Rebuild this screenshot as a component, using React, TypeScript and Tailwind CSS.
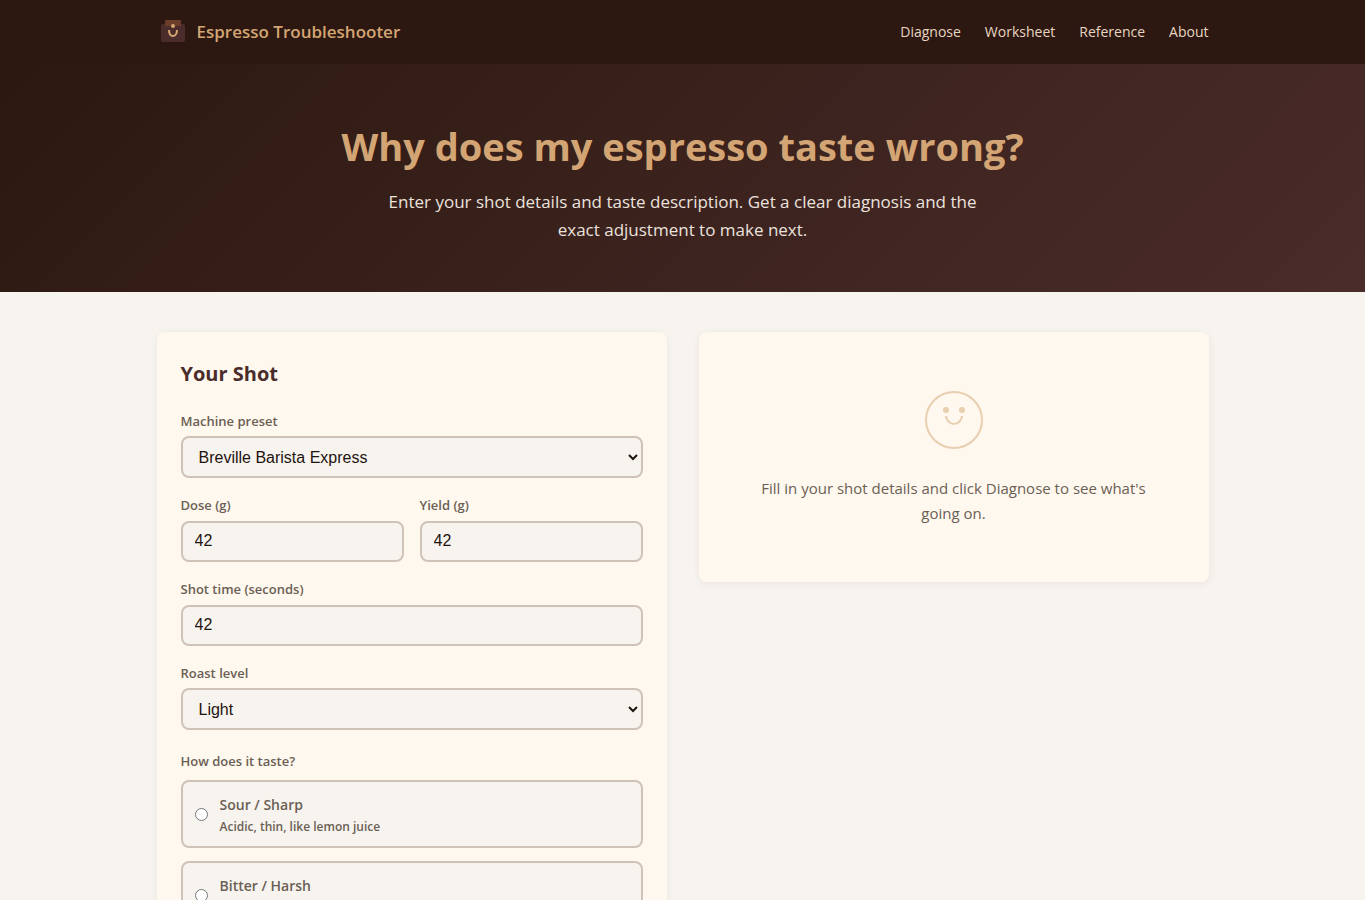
import { useState } from "react";
import type { ReactNode } from "react";

interface FieldProps {
    id: string;
    label: string;
    children: ReactNode;
}

interface NumberFieldProps {
    id: string;
    label: string;
    defaultValue: number;
}

interface SelectFieldProps {
    id: string;
    label: string;
    options: string[];
}

interface Taste {
    value: string;
    name: string;
    hint?: string;
}

const links = ["Diagnose", "Worksheet", "Reference", "About"];

const tastes: Taste[] = [
    { value: "sour", name: "Sour / Sharp", hint: "Acidic, thin, like lemon juice" },
    { value: "bitter", name: "Bitter / Harsh" },
];

const Logo = () => (
    <svg width="32" height="32" viewBox="0 0 32 32" fill="none" aria-hidden="true">
        <rect x="4" y="8" width="24" height="18" rx="2" fill="#4a2c2a" />
        <rect x="8" y="4" width="16" height="6" rx="1" fill="#6b3e2a" />
        <circle cx="16" cy="10" r="2" fill="#d4a574" />
        <path d="M12 14c0 4 2 6 4 6s4-2 4-6" stroke="#d4a574" strokeWidth="2" />
    </svg>
);

const Field = ({ id, label, children }: FieldProps) => (
    <div className="flex flex-col">
        <label htmlFor={id} className="text-[13px] leading-[22px] font-semibold text-[#6b5f55]">
            {label}
        </label>
        {children}
    </div>
);

const NumberField = ({ id, label, defaultValue }: NumberFieldProps) => (
    <Field id={id} label={label}>
        <input
            id={id}
            type="number"
            defaultValue={defaultValue}
            className="mt-[5px] h-[41px] w-full rounded-lg border-2 border-[#cfc3b8] bg-[#f7f3ee] px-3 pb-0.5 font-['Liberation_Sans',Arial,sans-serif] text-base text-[#1f1410]"
        />
    </Field>
);

const SelectField = ({ id, label, options }: SelectFieldProps) => (
    <Field id={id} label={label}>
        <select
            id={id}
            className="mt-1 h-[42px] w-full rounded-lg border-2 border-[#cfc3b8] bg-[#f7f3ee] px-3 font-['Liberation_Sans',Arial,sans-serif] text-base text-[#1f1410]"
        >
            {options.map((option) => (
                <option key={option}>{option}</option>
            ))}
        </select>
    </Field>
);

const Header = () => (
    <header className="bg-[#2c1810]">
        <div className="mx-auto flex h-16 max-w-[1100px] items-center justify-between px-6">
            <a href="#" className="flex items-center gap-2 text-[17px] font-semibold text-[#d4a574]">
                <Logo />
                Espresso Troubleshooter
            </a>
            <nav className="flex gap-6">
                {links.map((link) => (
                    <a key={link} href={`#${link.toLowerCase()}`} className="text-sm text-[#e8d5c0]">
                        {link}
                    </a>
                ))}
            </nav>
        </div>
    </header>
);

const Hero = () => (
    <section className="bg-linear-[135deg,#2c1810,#4a2c2a] px-6 py-12 text-center">
        <h1 className="text-[38px] leading-[68px] font-bold text-[#d4a574]">
            Why does my espresso taste wrong?
        </h1>
        <p className="mx-auto mt-2 max-w-[600px] text-[17px] leading-7 text-[#fff8ee] opacity-90">
            Enter your shot details and taste description. Get a clear diagnosis and the exact adjustment to
            make next.
        </p>
    </section>
);

const ShotForm = () => {
    const [taste, setTaste] = useState("");

    return (
        <form className="rounded-lg bg-[#fff8ee] p-6 shadow-[0_2px_8px_rgba(44,24,16,0.06)]">
            <h2 className="mb-[18px] text-xl leading-9 font-bold text-[#4a2c2a]">Your Shot</h2>
            <div className="flex flex-col gap-4">
                <SelectField id="machine" label="Machine preset" options={["Breville Barista Express"]} />
                <div className="grid grid-cols-2 gap-4">
                    <NumberField id="dose" label="Dose (g)" defaultValue={42} />
                    <NumberField id="yield" label="Yield (g)" defaultValue={42} />
                </div>
                <NumberField id="time" label="Shot time (seconds)" defaultValue={42} />
                <SelectField id="roast" label="Roast level" options={["Light"]} />
            </div>

            <fieldset className="mt-5">
                <legend className="text-[13px] leading-[22px] font-semibold text-[#6b5f55]">
                    How does it taste?
                </legend>
                <div className="mt-2 flex flex-col gap-[13px]">
                    {tastes.map(({ value, name, hint }) => (
                        <label
                            key={value}
                            className="flex min-h-[68px] cursor-pointer items-center gap-3 rounded-lg border-2 border-[#cfc3b8] bg-[#f7f3ee] px-3 py-2 text-[#6b5f55]"
                        >
                            <input
                                type="radio"
                                name="taste"
                                value={value}
                                checked={taste === value}
                                onChange={() => setTaste(value)}
                                className="size-[13px]"
                            />
                            <span className="flex min-h-[46px] flex-col pt-0.5">
                                <span className="text-sm leading-6 font-semibold">{name}</span>
                                {hint && <span className="text-xs leading-5 font-semibold">{hint}</span>}
                            </span>
                        </label>
                    ))}
                </div>
            </fieldset>
        </form>
    );
};

const EmptyResult = () => (
    <section className="flex flex-col items-center rounded-lg bg-[#fff8ee] px-12 py-14 text-center shadow-[0_2px_8px_rgba(44,24,16,0.06)]">
        <svg width="64" height="64" viewBox="0 0 64 64" fill="none" className="opacity-50" aria-hidden="true">
            <circle cx="32" cy="32" r="28" stroke="#d4a574" strokeWidth="2" />
            <circle cx="24" cy="22" r="3" fill="#d4a574" />
            <circle cx="40" cy="22" r="3" fill="#d4a574" />
            <path d="M24 28c0 4 4 8 8 8s8-4 8-8" stroke="#d4a574" strokeWidth="2" />
        </svg>
        <p className="mt-6 text-[15px] leading-[25px] text-[#6b5f55]">
            Fill in your shot details and click Diagnose to see what's going on.
        </p>
    </section>
);

const App = () => {
    return (
        <div className="min-h-screen bg-[#f7f3ee] font-['Segoe_UI','Open_Sans',sans-serif]">
            <Header />
            <Hero />
            <main className="mx-auto grid max-w-[1100px] grid-cols-2 items-start gap-8 px-6 py-10">
                <ShotForm />
                <EmptyResult />
            </main>
        </div>
    );
};

export default App;
